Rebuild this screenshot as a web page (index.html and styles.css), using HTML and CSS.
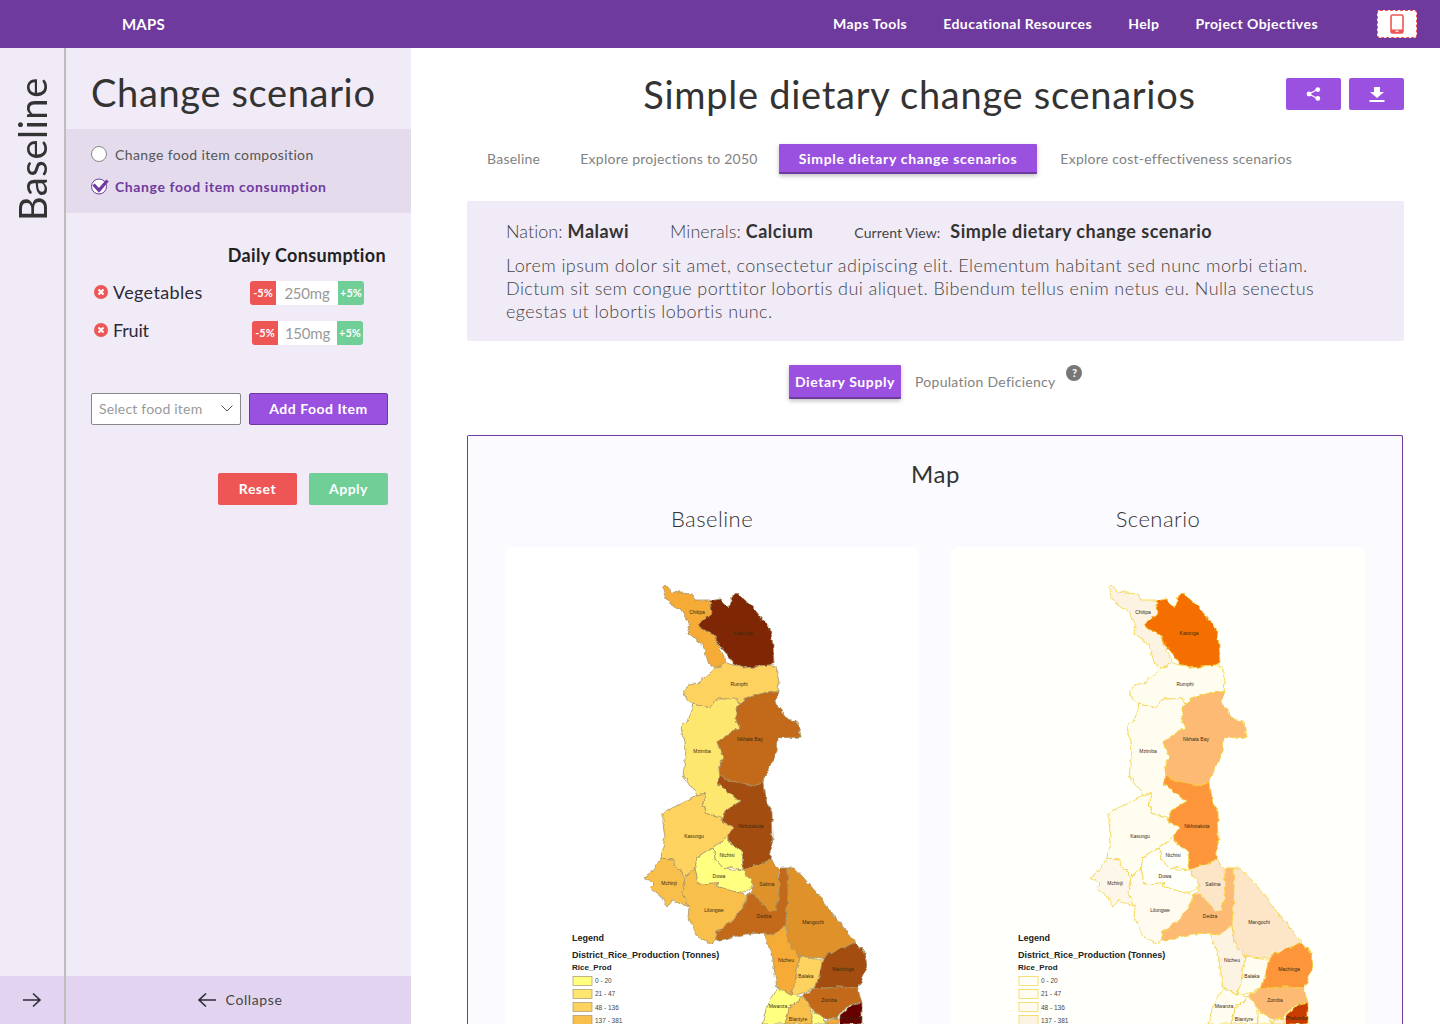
FILE: index.html
```html
<!DOCTYPE html>
<html lang="en">
<head>
    <meta charset="UTF-8">
    <meta name="viewport" content="width=device-width, initial-scale=1.0">
    <title>MAPS - Simple dietary change scenarios</title>
    <link rel="stylesheet" href="styles.css">
</head>
<body>
    <header class="topbar">
        <div class="brand">MAPS</div>
        <nav class="topnav">
            <a>Maps Tools</a>
            <a>Educational Resources</a>
            <a>Help</a>
            <a>Project Objectives</a>
        </nav>
        <div class="device-btn">
            <svg width="14" height="20" viewBox="0 0 14 20"><rect x="1" y="1" width="12" height="18" rx="1.5" fill="none" stroke="#ee5555" stroke-width="1.6"/><rect x="1" y="15.5" width="12" height="3.5" fill="#ee5555"/><rect x="5.5" y="16.6" width="3" height="1.2" fill="#fff"/></svg>
        </div>
    </header>

    <div class="layout">
        <aside class="rail">
            <div class="rail-title-wrap"><div class="rail-title">Baseline</div></div>
            <div class="rail-foot">
                <svg class="arrow" width="20" height="16" viewBox="0 0 20 16"><path d="M1 8H18M11 1.5L18 8L11 14.5" fill="none" stroke="#2b2b33" stroke-width="1.6"/></svg>
            </div>
        </aside>

        <aside class="sidebar">
            <h2 class="side-title">Change scenario</h2>
            <div class="choice-box">
                <div class="choice">
                    <span class="radio"></span>
                    <span>Change food item composition</span>
                </div>
                <div class="choice selected">
                    <svg width="18" height="18" viewBox="0 0 18 18"><circle cx="8" cy="9.5" r="7.5" fill="#fff" stroke="#6f3a9e" stroke-width="1"/><path d="M2.5 7.5L8 13.4L16.5 3.5" fill="none" stroke="#6f3a9e" stroke-width="3.2"/></svg>
                    <span>Change food item consumption</span>
                </div>
            </div>

            <div class="consumption">
                <div class="consumption-title">Daily Consumption</div>
                <div class="food-row">
                    <div class="food-name">
                        <svg width="14" height="14" viewBox="0 0 14 14"><circle cx="7" cy="7" r="7" fill="#ee5555"/><path d="M4.5 4.5L9.5 9.5M9.5 4.5L4.5 9.5" stroke="#fff" stroke-width="2"/></svg>
                        <span>Vegetables</span>
                    </div>
                    <div class="stepper">
                        <span class="step minus">-5%</span>
                        <span class="amount">250mg</span>
                        <span class="step plus">+5%</span>
                    </div>
                </div>
                <div class="food-row fruit">
                    <div class="food-name">
                        <svg width="14" height="14" viewBox="0 0 14 14"><circle cx="7" cy="7" r="7" fill="#ee5555"/><path d="M4.5 4.5L9.5 9.5M9.5 4.5L4.5 9.5" stroke="#fff" stroke-width="2"/></svg>
                        <span>Fruit</span>
                    </div>
                    <div class="stepper small">
                        <span class="step minus">-5%</span>
                        <span class="amount">150mg</span>
                        <span class="step plus">+5%</span>
                    </div>
                </div>
                <div class="add-row">
                    <div class="select">
                        <span>Select food item</span>
                        <svg width="12" height="7" viewBox="0 0 12 7"><path d="M0.5 0.5L6 6L11.5 0.5" fill="none" stroke="#555" stroke-width="1"/></svg>
                    </div>
                    <button class="add-btn">Add Food Item</button>
                </div>
                <div class="action-row">
                    <button class="reset-btn">Reset</button>
                    <button class="apply-btn">Apply</button>
                </div>
            </div>

            <div class="side-foot">
                <svg width="20" height="16" viewBox="0 0 20 16"><path d="M19 8H2M9 1.5L2 8L9 14.5" fill="none" stroke="#2b2b33" stroke-width="1.6"/></svg>
                <span>Collapse</span>
            </div>
        </aside>

        <main class="content">
            <div class="title-row">
                <h1>Simple dietary change scenarios</h1>
                <div class="title-actions">
                    <button class="icon-btn">
                        <svg width="15" height="14" viewBox="0 0 15 14"><path d="M11.5 2.5L3 7L11.5 11.5" fill="none" stroke="#fff" stroke-width="1.2"/><circle cx="11.8" cy="2.6" r="2.4" fill="#fff"/><circle cx="3" cy="7" r="2.4" fill="#fff"/><circle cx="11.8" cy="11.4" r="2.4" fill="#fff"/></svg>
                    </button>
                    <button class="icon-btn">
                        <svg width="16" height="15" viewBox="0 0 16 15"><path d="M5 0H11V5H15L8 11L1 5H5Z" fill="#fff"/><rect x="0.5" y="13" width="15" height="2" fill="#fff"/></svg>
                    </button>
                </div>
            </div>

            <div class="tabs">
                <a class="tab">Baseline</a>
                <a class="tab">Explore projections to 2050</a>
                <a class="tab active">Simple dietary change scenarios</a>
                <a class="tab">Explore cost-effectiveness scenarios</a>
            </div>

            <section class="info-box">
                <div class="info-head">
                    <span class="info-item">Nation: <b>Malawi</b></span>
                    <span class="info-item">Minerals: <b>Calcium</b></span>
                    <span class="info-view"><small>Current View:</small> <b>Simple dietary change scenario</b></span>
                </div>
                <p>Lorem ipsum dolor sit amet, consectetur adipiscing elit. Elementum habitant sed nunc morbi etiam. Dictum sit sem congue porttitor lobortis dui aliquet. Bibendum tellus enim netus eu. Nulla senectus egestas ut lobortis lobortis nunc.</p>
            </section>

            <div class="subtabs">
                <a class="subtab active">Dietary Supply</a>
                <a class="subtab">Population Deficiency</a>
                <span class="help">?</span>
            </div>

            <section class="map-card">
                <h3 class="map-title">Map</h3>
                <div class="map-grid">
                    <div class="map-col baseline">
                        <h4>Baseline</h4>
                        <div class="map-panel">
                            <svg class="map-svg" width="414" height="477" viewBox="505 547 414 477">
                                <defs>
                                    <!-- gives the hand-plotted borders the wobble of the scanned map -->
                                    <filter id="rough" x="0" y="0" width="100%" height="100%" color-interpolation-filters="sRGB">
                                        <feTurbulence type="fractalNoise" baseFrequency="0.16" numOctaves="2" seed="4"/>
                                        <feDisplacementMap in="SourceGraphic" scale="5" xChannelSelector="R" yChannelSelector="G"/>
                                    </filter>
                                    <g id="malawi">
                                        <path class="chitipa" d="M662 588L666 585L672 592L680 593L692 594L695 600L710 600L712 612L710 617L698 625L715 637L717 643L727 662L716 669L708 662L703 645L687 633L690 625L680 608L673 607L665 596Z"/>
                                        <path class="karonga" d="M710 601L720 599L729 608L732 597L737 593L745 600L755 610L770 628L773 645L774 663L770 666L743 668L733 663L725 652L717 643L715 637L698 625L712 613Z"/>
                                        <path class="rumphi" d="M683 690L690 685L700 682L716 669L727 662L743 668L770 666L776 667L779 682L778 692L767 692L747 698L739 703L735 697L730 699L716 699L710 708L693 704L687 700Z"/>
                                        <path class="mzimba" d="M693 704L710 708L716 699L730 699L735 697L739 703L735 717L740 728L732 732L717 742L723 757L719 767L720 778L717 783L730 793L740 802L725 811L722 822L720 817L705 813L703 803L705 793L697 795L687 780L683 775L686 750L683 738L681 727L687 722Z"/>
                                        <path class="kasungu" d="M663 813L672 808L683 803L697 795L705 793L703 803L705 813L720 817L722 822L734 828L728 837L713 848L697 858L695 868L685 877L678 868L672 859L661 858L665 837L663 823Z"/>
                                        <path class="nkhata" d="M735 717L739 703L747 698L767 692L778 692L776 701L778 707L788 719L798 723L801 737L778 738L777 752L770 765L763 783L750 786L732 782L720 775L719 767L723 757L717 742L732 732L740 728Z"/>
                                        <path class="nkhotakota" d="M717 783L720 775L732 782L750 786L763 783L765 799L772 813L773 837L770 860L743 871L742 852L729 842L729 833L734 828L722 822L725 811L740 802L730 793Z"/>
                                        <path class="ntchisi" d="M713 848L728 837L729 842L742 852L743 871L732 867L725 869L715 858Z"/>
                                        <path class="dowa" d="M695 868L697 858L713 848L715 858L725 869L743 871L754 883L750 888L740 893L718 887L717 883L698 884Z"/>
                                        <path class="salima" d="M743 870L770 860L778 868L779 897L775 910L770 912L763 905L755 895L748 895L754 885Z"/>
                                        <path class="dedza" d="M779 868L788 868L788 897L786 925L773 935L763 933L747 934L733 937L720 940L713 938L712 945L717 931L730 923L742 908L749 895L755 895L763 905L770 912L775 910L779 897Z"/>
                                        <path class="mangochi" d="M788 868L795 868L817 893L840 923L856 943L842 948L823 958L800 957L788 943L786 925L788 897Z"/>
                                        <path class="mchinji" d="M643 877L652 872L661 858L672 859L678 868L685 877L682 892L689 907L680 903L672 900L667 907L660 895L650 888L655 883Z"/>
                                        <path class="lilongwe" d="M685 877L695 868L698 884L717 883L718 887L740 893L749 895L742 908L730 923L717 931L712 945L698 937L688 917L689 907L682 892Z"/>
                                        <path class="ntcheu" d="M763 933L773 935L786 925L788 943L800 957L792 995L777 988L772 953Z"/>
                                        <path class="balaka" d="M800 957L823 960L820 973L815 988L803 993L792 996Z"/>
                                        <path class="machinga" d="M823 958L842 948L856 943L863 950L867 965L862 980L858 988L837 987L815 989L820 973Z"/>
                                        <path class="zomba" d="M803 995L815 989L837 987L858 988L862 1003L850 1005L840 1013L837 1019L823 1018L810 1007Z"/>
                                        <path class="phalombe" d="M840 1015L852 1005L862 1003L862 1024L840 1024Z"/>
                                        <path class="mwanza" d="M777 989L792 995L803 997L790 1007L785 1024L762 1024L767 1007Z"/>
                                        <path class="blantyre" d="M790 1007L803 997L810 1007L812 1024L785 1024Z"/>
                                        <path class="mwanza" d="M812 1010L823 1018L827 1024L812 1024Z"/>
                                        <path class="chitipa" d="M827 1020L840 1019L838 1024L827 1024Z"/>
                                    </g>
                                </defs>
                                <use class="map-shape" href="#malawi"/>
                                <g class="labels">
                                    <text x="697" y="614">Chitipa</text>
                                    <text x="743" y="635">Karonga</text>
                                    <text x="739" y="686">Rumphi</text>
                                    <text x="750" y="741">Nkhata Bay</text>
                                    <text x="702" y="753">Mzimba</text>
                                    <text x="751" y="828">Nkhotakota</text>
                                    <text x="694" y="838">Kasungu</text>
                                    <text x="727" y="857">Ntchisi</text>
                                    <text x="719" y="878">Dowa</text>
                                    <text x="669" y="885">Mchinji</text>
                                    <text x="767" y="886">Salima</text>
                                    <text x="714" y="912">Lilongwe</text>
                                    <text x="764" y="918">Dedza</text>
                                    <text x="813" y="924">Mangochi</text>
                                    <text x="786" y="962">Ntcheu</text>
                                    <text x="806" y="978">Balaka</text>
                                    <text x="843" y="971">Machinga</text>
                                    <text x="829" y="1002">Zomba</text>
                                    <text x="778" y="1008">Mwanza</text>
                                    <text x="798" y="1021">Blantyre</text>
                                    <text x="851" y="1020">Phalombe</text>
                                </g>
                                <g class="legend">
                                    <text class="lg-a" x="572" y="941">Legend</text>
                                    <text class="lg-b" x="572" y="958">District_Rice_Production (Tonnes)</text>
                                    <text class="lg-c" x="572" y="970">Rice_Prod</text>
                                    <rect class="sw1" x="573" y="976.5" width="19" height="9"/>
                                    <text x="595" y="983">0 - 20</text>
                                    <rect class="sw2" x="573" y="989.5" width="19" height="9"/>
                                    <text x="595" y="996">21 - 47</text>
                                    <rect class="sw3" x="573" y="1002.5" width="19" height="9"/>
                                    <text x="595" y="1010">48 - 136</text>
                                    <rect class="sw4" x="573" y="1015.5" width="19" height="9"/>
                                    <text x="595" y="1023">137 - 381</text>
                                </g>
                            </svg>
                        </div>
                    </div>
                    <div class="map-col scenario">
                        <h4>Scenario</h4>
                        <div class="map-panel">
                            <svg class="map-svg" width="414" height="477" viewBox="505 547 414 477">
                                <use class="map-shape" href="#malawi"/>
                                <g class="labels">
                                    <text x="697" y="614">Chitipa</text>
                                    <text x="743" y="635">Karonga</text>
                                    <text x="739" y="686">Rumphi</text>
                                    <text x="750" y="741">Nkhata Bay</text>
                                    <text x="702" y="753">Mzimba</text>
                                    <text x="751" y="828">Nkhotakota</text>
                                    <text x="694" y="838">Kasungu</text>
                                    <text x="727" y="857">Ntchisi</text>
                                    <text x="719" y="878">Dowa</text>
                                    <text x="669" y="885">Mchinji</text>
                                    <text x="767" y="886">Salima</text>
                                    <text x="714" y="912">Lilongwe</text>
                                    <text x="764" y="918">Dedza</text>
                                    <text x="813" y="924">Mangochi</text>
                                    <text x="786" y="962">Ntcheu</text>
                                    <text x="806" y="978">Balaka</text>
                                    <text x="843" y="971">Machinga</text>
                                    <text x="829" y="1002">Zomba</text>
                                    <text x="778" y="1008">Mwanza</text>
                                    <text x="798" y="1021">Blantyre</text>
                                    <text x="851" y="1020">Phalombe</text>
                                </g>
                                <g class="legend">
                                    <text class="lg-a" x="572" y="941">Legend</text>
                                    <text class="lg-b" x="572" y="958">District_Rice_Production (Tonnes)</text>
                                    <text class="lg-c" x="572" y="970">Rice_Prod</text>
                                    <rect class="sw1" x="573" y="976.5" width="19" height="9"/>
                                    <text x="595" y="983">0 - 20</text>
                                    <rect class="sw2" x="573" y="989.5" width="19" height="9"/>
                                    <text x="595" y="996">21 - 47</text>
                                    <rect class="sw3" x="573" y="1002.5" width="19" height="9"/>
                                    <text x="595" y="1010">48 - 136</text>
                                    <rect class="sw4" x="573" y="1015.5" width="19" height="9"/>
                                    <text x="595" y="1023">137 - 381</text>
                                </g>
                            </svg>
                        </div>
                    </div>
                </div>
            </section>
        </main>
    </div>
</body>
</html>
```
FILE: styles.css
```css
* {
    box-sizing: border-box;
}
body {
    margin: 0;
    height: 1024px;
    overflow: hidden;
    font-family: "Lato", "Open Sans", sans-serif;
    color: #333;
    background-color: #fff;
}
h1, h2, h3, h4, p {
    margin: 0;
    font-weight: 400;
}
button {
    font-family: inherit;
    border: none;
    cursor: pointer;
    padding: 0 0 2px;
}

/* Top bar */
.topbar {
    height: 48px;
    background-color: #6f3a9e;
    color: #fff;
    display: flex;
    align-items: center;
    padding: 0 23px 0 122px;
}
.brand {
    font-size: 15px;
    font-weight: 700;
    letter-spacing: 0.2px;
}
.topnav {
    margin-left: auto;
    display: flex;
    gap: 36px;
    font-size: 14px;
    font-weight: 700;
    letter-spacing: 0.45px;
    padding-bottom: 2px;
}
.device-btn {
    width: 40px;
    height: 28px;
    margin-left: 59px;
    background-color: #fff;
    border: 1px dashed #ee5555;
    border-radius: 3px;
    display: flex;
    align-items: center;
    justify-content: center;
}

.layout {
    display: flex;
    height: 976px;
}

/* Left rail */
.rail {
    width: 66px;
    flex: none;
    display: flex;
    flex-direction: column;
    background-color: #f1ebf7;
    border-right: 2px solid #bdbdbd;
}
.rail-title-wrap {
    flex: 1;
    padding-top: 29px;
    display: flex;
    justify-content: center;
}
.rail-title {
    writing-mode: vertical-rl;
    transform: rotate(180deg);
    font-size: 38px;
    line-height: 40px;
    height: 144px;
    text-align: left;
    letter-spacing: 0.6px;
}
.rail-foot {
    height: 48px;
    background-color: #e2d4f0;
    display: flex;
    align-items: center;
    justify-content: center;
}

/* Sidebar */
.sidebar {
    width: 345px;
    flex: none;
    display: flex;
    flex-direction: column;
    background-color: #f1ebf7;
}
.side-title {
    font-size: 38px;
    line-height: 46px;
    padding: 21px 0 14px 25px;
    letter-spacing: 0.65px;
}
.choice-box {
    height: 84px;
    background-color: #e4dced;
    padding: 9px 0 0 25px;
    display: flex;
    flex-direction: column;
    font-size: 14px;
    letter-spacing: 0.37px;
    color: #555;
}
.choice {
    height: 32px;
    display: flex;
    align-items: center;
    gap: 8px;
}
.choice.selected {
    color: #6f3a9e;
    font-weight: 700;
    letter-spacing: 0.6px;
    gap: 6px;
}
.radio {
    width: 16px;
    height: 16px;
    border-radius: 50%;
    background-color: #fff;
    border: 1px solid #888;
}
.consumption {
    flex: 1;
    padding: 30px 23px 0 25px;
}
.consumption-title {
    text-align: right;
    font-size: 18px;
    line-height: 24px;
    font-weight: 700;
    color: #222;
    margin-right: 2px;
    letter-spacing: 0.35px;
}
.food-row {
    margin-top: 14px;
    height: 24px;
    display: flex;
    align-items: center;
    justify-content: space-between;
    padding-left: 3px;
    padding-right: 24px;
}
.food-row.fruit {
    margin-top: 16px;
    padding-right: 25px;
}
.food-name {
    display: flex;
    align-items: center;
    gap: 5px;
    font-size: 18px;
    color: #2b2b33;
    letter-spacing: 0.35px;
    margin-bottom: 2px;
}
.fruit .food-name {
    margin-bottom: 6px;
    letter-spacing: -0.2px;
}
.food-name svg {
    margin-top: -1px;
}
.stepper {
    display: flex;
    width: 114px;
    height: 24px;
    border-radius: 3px;
    overflow: hidden;
    font-size: 11px;
    line-height: 24px;
    text-align: center;
    color: #fff;
    font-weight: 700;
}
.stepper.small {
    width: 111px;
}
.step {
    width: 26px;
    flex: none;
}
.step.minus {
    background-color: #ee5555;
}
.step.plus {
    background-color: #6fcf97;
}
.amount {
    flex: 1;
    background-color: #fff;
    color: #999;
    font-size: 15px;
    font-weight: 400;
    letter-spacing: -0.2px;
}
.add-row {
    margin-top: 48px;
    display: flex;
    justify-content: space-between;
}
.select {
    width: 150px;
    height: 32px;
    background-color: #fff;
    border: 1px solid #888;
    border-radius: 2px;
    padding: 0 7px 2px;
    display: flex;
    align-items: center;
    justify-content: space-between;
    font-size: 14px;
    color: #999;
    letter-spacing: 0.2px;
}
.add-btn {
    width: 139px;
    height: 32px;
    background-color: #9b51e0;
    border: 1px solid #6f3a9e;
    border-radius: 2px;
    color: #fff;
    font-size: 14px;
    font-weight: 700;
    letter-spacing: 0.5px;
}
.action-row {
    margin-top: 48px;
    display: flex;
    justify-content: flex-end;
    gap: 12px;
}
.reset-btn, .apply-btn {
    width: 79px;
    height: 32px;
    border-radius: 2px;
    color: #fff;
    font-size: 14px;
    font-weight: 700;
    letter-spacing: 0.5px;
}
.reset-btn {
    background-color: #ee5555;
}
.apply-btn {
    background-color: #6fcf97;
}
.side-foot {
    height: 48px;
    background-color: #e2d4f0;
    display: flex;
    align-items: center;
    justify-content: center;
    gap: 9px;
    font-size: 14px;
    letter-spacing: 0.6px;
    color: #444;
    padding-left: 2px;
}
.side-foot span {
    padding-bottom: 2px;
}

/* Main content */
.content {
    flex: 1;
    min-width: 0;
    padding: 0 36px 0 56px;
}
.title-row {
    height: 96px;
    display: flex;
    align-items: flex-start;
}
.title-row h1 {
    flex: 1;
    font-size: 38px;
    line-height: 46px;
    padding: 23px 0 0 86px;
    text-align: center;
    letter-spacing: 0.72px;
    white-space: nowrap;
}
.title-actions {
    margin-top: 30px;
    display: flex;
    gap: 8px;
}
.icon-btn {
    width: 55px;
    height: 32px;
    padding: 0;
    background-color: #9b51e0;
    border-radius: 2px;
    display: flex;
    align-items: center;
    justify-content: center;
}
.tabs {
    display: flex;
    align-items: center;
    height: 30px;
    font-size: 14px;
    letter-spacing: 0.25px;
    color: #828282;
}
.tab {
    padding: 0 20px 2px;
    white-space: nowrap;
}
.tab.active {
    height: 30px;
    line-height: 30px;
    padding-bottom: 0;
    margin: 0 3px 0 1px;
    background-color: #9b51e0;
    color: #fff;
    font-weight: 700;
    letter-spacing: 0.66px;
    border-bottom: 2px solid #6f3a9e;
    border-radius: 1px;
    box-shadow: 0 2px 4px rgba(0,0,0,0.25);
}
.info-box {
    margin-top: 27px;
    height: 140px;
    background-color: #f1ebf7;
    padding: 18px 80px 0 39px;
    border-radius: 2px;
}
.info-head {
    display: flex;
    align-items: baseline;
    font-size: 18px;
    line-height: 24px;
    font-weight: 300;
    letter-spacing: 0.05px;
    color: #444;
    white-space: nowrap;
}
.info-head b {
    font-weight: 700;
    color: #333;
    letter-spacing: 0.5px;
}
.info-item {
    margin-right: 41px;
}
.info-view small {
    font-size: 14px;
    font-weight: 400;
    margin-right: 5px;
    letter-spacing: 0.1px;
}
.info-box p {
    margin-top: 9px;
    font-size: 18px;
    line-height: 23px;
    font-weight: 300;
    letter-spacing: 0.42px;
    color: #444;
}
.subtabs {
    margin-top: 24px;
    height: 34px;
    display: flex;
    align-items: center;
    padding-left: 322px;
    font-size: 14px;
    letter-spacing: 0.27px;
    color: #828282;
}
.subtab {
    white-space: nowrap;
    padding-bottom: 2px;
}
.subtab.active {
    width: 112px;
    height: 34px;
    line-height: 34px;
    padding-bottom: 0;
    text-align: center;
    margin-right: 14px;
    background-color: #9b51e0;
    color: #fff;
    font-weight: 700;
    letter-spacing: 0.6px;
    border-bottom: 2px solid #6f3a9e;
    border-radius: 1px;
    box-shadow: 0 2px 4px rgba(0,0,0,0.25);
}
.help {
    width: 16px;
    height: 16px;
    margin: -19px 0 0 11px;
    border-radius: 50%;
    background-color: #777;
    color: #fff;
    font-size: 11px;
    font-weight: 700;
    line-height: 16px;
    text-align: center;
    letter-spacing: 0;
}
.map-card {
    margin: 36px 1px 0 0;
    height: 589px;
    background-color: #fbfaff;
    border: 1px solid #6f3a9e;
    border-bottom: none;
    border-radius: 2px 2px 0 0;
    padding: 23px 36px 0 37px;
}
.map-title {
    text-align: center;
    font-size: 24px;
    line-height: 30px;
    letter-spacing: 0.5px;
    color: #333;
}
.map-grid {
    display: grid;
    grid-template-columns: 414px 414px;
    gap: 32px;
    margin-top: 15px;
}
.map-col h4 {
    text-align: center;
    font-size: 22px;
    line-height: 30px;
    letter-spacing: 0.45px;
    font-weight: 300;
    color: #333;
    margin-bottom: 13px;
}
.map-panel {
    height: 477px;
    border-radius: 8px 8px 0 0;
    overflow: hidden;
}
.baseline .map-panel {
    background-color: #fff;
}
.scenario .map-panel {
    background-color: #fffffb;
}
.map-svg {
    display: block;
}
.map-shape {
    filter: url(#rough);
}

/* Map colours */
.baseline {
    --line: #a8966a;
    --chitipa: #f5ab35;
    --karonga: #7f2704;
    --rumphi: #fdd25f;
    --mzimba: #fee76e;
    --kasungu: #fdd25f;
    --nkhata: #c26a1a;
    --nkhotakota: #a34e10;
    --ntchisi: #ffff80;
    --dowa: #ffff80;
    --salima: #e0922a;
    --dedza: #c26a1a;
    --mangochi: #e0922a;
    --mchinji: #f8bf4b;
    --lilongwe: #f8bf4b;
    --ntcheu: #f5ab35;
    --balaka: #fdd25f;
    --machinga: #a34e10;
    --zomba: #c26a1a;
    --phalombe: #660000;
    --mwanza: #ffff80;
    --blantyre: #f8bf4b;
    --sw1: #ffff80;
    --sw2: #fee76e;
    --sw3: #fdd25f;
    --sw4: #f8bf4b;
}
.scenario {
    --line: #f2d23c;
    --chitipa: #fdf3e3;
    --karonga: #f56f00;
    --rumphi: #fffdf0;
    --mzimba: #fffdf0;
    --kasungu: #fffdf0;
    --nkhata: #fdba74;
    --nkhotakota: #fd963a;
    --ntchisi: #fffffa;
    --dowa: #fffffa;
    --salima: #fde5c8;
    --dedza: #fdba74;
    --mangochi: #fde5c8;
    --mchinji: #fdf7ea;
    --lilongwe: #fffbf0;
    --ntcheu: #fdf3e3;
    --balaka: #fffdf0;
    --machinga: #fd963a;
    --zomba: #fdba74;
    --phalombe: #c93c00;
    --mwanza: #fffdf0;
    --blantyre: #fffbf0;
    --sw1: #fffffa;
    --sw2: #fffdf0;
    --sw3: #fffbf0;
    --sw4: #fdf3e3;
}
#malawi path {
    stroke: var(--line);
    stroke-width: 0.8;
    stroke-linejoin: round;
}
.chitipa { fill: var(--chitipa); }
.karonga { fill: var(--karonga); }
.rumphi { fill: var(--rumphi); }
.mzimba { fill: var(--mzimba); }
.kasungu { fill: var(--kasungu); }
.nkhata { fill: var(--nkhata); }
.nkhotakota { fill: var(--nkhotakota); }
.ntchisi { fill: var(--ntchisi); }
.dowa { fill: var(--dowa); }
.salima { fill: var(--salima); }
.dedza { fill: var(--dedza); }
.mangochi { fill: var(--mangochi); }
.mchinji { fill: var(--mchinji); }
.lilongwe { fill: var(--lilongwe); }
.ntcheu { fill: var(--ntcheu); }
.balaka { fill: var(--balaka); }
.machinga { fill: var(--machinga); }
.zomba { fill: var(--zomba); }
.phalombe { fill: var(--phalombe); }
.mwanza { fill: var(--mwanza); }
.blantyre { fill: var(--blantyre); }

.labels text {
    font-family: "Liberation Sans", sans-serif;
    font-size: 5px;
    text-anchor: middle;
    fill: #3a2a10;
}
.legend text {
    font-family: "Liberation Sans", sans-serif;
    font-size: 6.5px;
    fill: #444;
}
.legend .lg-a, .legend .lg-b {
    font-size: 9px;
    font-weight: 700;
    fill: #222;
}
.legend .lg-c {
    font-size: 8px;
    font-weight: 700;
    fill: #222;
}
.legend rect {
    stroke: var(--line);
    stroke-width: 0.7;
}
.sw1 { fill: var(--sw1); }
.sw2 { fill: var(--sw2); }
.sw3 { fill: var(--sw3); }
.sw4 { fill: var(--sw4); }
```
